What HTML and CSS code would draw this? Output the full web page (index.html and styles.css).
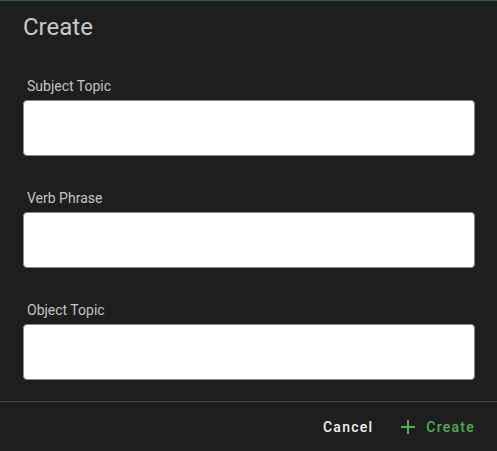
FILE: index.html
```html
<!DOCTYPE html>
<html>
<head>
<meta charset="utf-8">
<link rel="stylesheet" href="styles.css">
</head>
<body>
<div class="dialog">
  <div class="content">
    <h1 class="title">Create</h1>
    <div class="fields">
      <div class="field">
        <label class="label">Subject Topic</label>
        <input class="input" type="text">
      </div>
      <div class="field">
        <label class="label">Verb Phrase</label>
        <input class="input" type="text">
      </div>
      <div class="field">
        <label class="label">Object Topic</label>
        <input class="input" type="text">
      </div>
    </div>
  </div>
  <div class="actions">
    <button class="btn btn-cancel">Cancel</button>
    <button class="btn btn-create">
      <svg class="plus" width="14" height="14" viewBox="0 0 14 14"><path d="M7 0v14M0 7h14" stroke="currentColor" stroke-width="2"/></svg>
      Create
    </button>
  </div>
</div>
</body>
</html>
```
FILE: styles.css
```css
html, body {
  margin: 0;
  padding: 0;
  background: #1e1e1e;
}
body {
  font-family: Roboto, "Liberation Sans", sans-serif;
  width: 497px;
  height: 451px;
  overflow: hidden;
}
.dialog {
  border-top: 1px solid #2f6233;
  background: #1e1e1e;
  height: 450px;
  display: flex;
  flex-direction: column;
}
.content {
  padding: 10px 22px 0 23px;
  flex: 1;
}
.title {
  margin: 0;
  font-size: 24px;
  line-height: 32px;
  font-weight: 400;
  color: #c9c9c9;
}
.fields {
  margin-top: 33px;
  display: flex;
  flex-direction: column;
  gap: 32px;
}
.field {
  display: flex;
  flex-direction: column;
  gap: 4px;
}
.label {
  font-size: 14px;
  line-height: 20px;
  color: #c4c4c4;
  padding-left: 4px;
}
.input {
  box-sizing: border-box;
  width: 452px;
  height: 56px;
  margin: 0;
  background: #fff;
  border: 1px solid #8a8a8a;
  border-radius: 4px;
  outline: none;
}
.actions {
  border-top: 1px solid #3f3f3f;
  height: 49px;
  display: flex;
  justify-content: flex-end;
  align-items: center;
  padding-right: 22px;
  gap: 28px;
}
.btn {
  background: none;
  border: none;
  padding: 0;
  font-family: Roboto, "Liberation Sans", sans-serif;
  font-size: 14px;
  font-weight: 500;
  letter-spacing: 1.25px;
  display: flex;
  align-items: center;
  gap: 11px;
  line-height: 20px;
}
.btn-cancel {
  color: #f2f2f2;
}
.btn-create {
  color: #4caf50;
}
.plus {
  display: block;
}
```
